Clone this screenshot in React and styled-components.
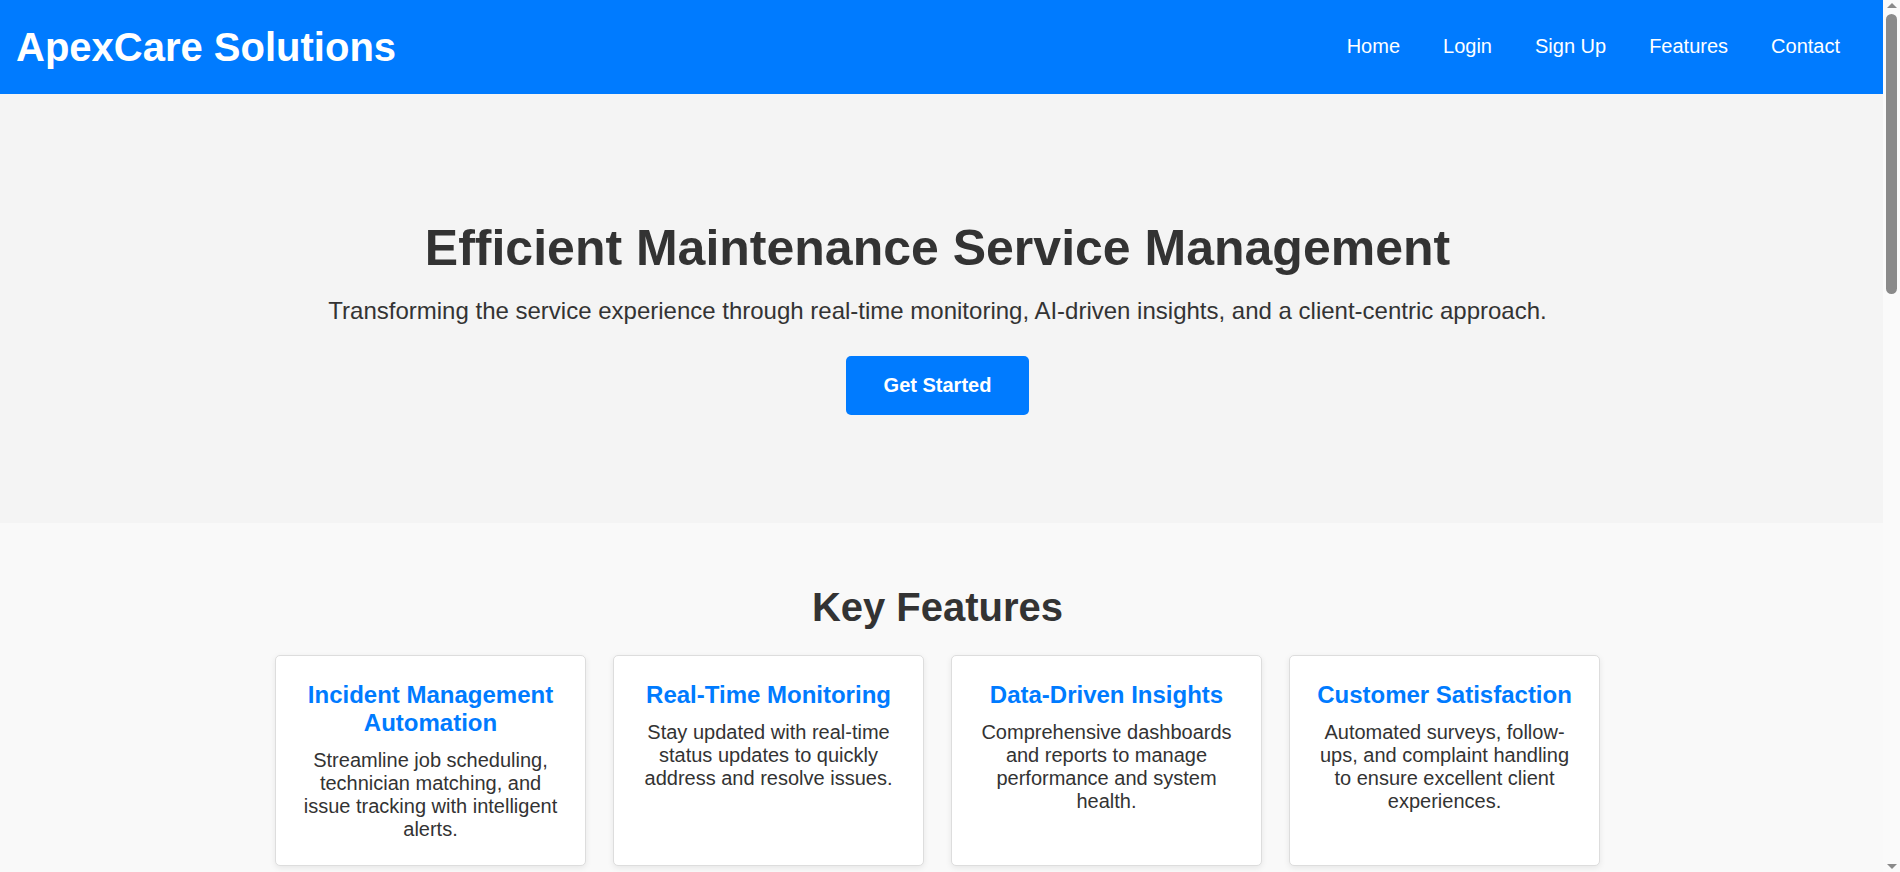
import React from 'react'
import styled, { createGlobalStyle } from 'styled-components'

const GlobalStyle = createGlobalStyle`
  html::-webkit-scrollbar { display: none; }
  html { scrollbar-width: none; }
  body {
    margin: 0;
    font-family: "Liberation Sans", Arial, Helvetica, sans-serif;
    color: #333;
    background: #f9f9f9;
  }
  * { box-sizing: border-box; }
`

const Page = styled.div`
  margin-right: 17px;
`

const ScrollTrack = styled.div`
  position: fixed;
  top: 0;
  right: 0;
  width: 17px;
  height: 100vh;
  display: flex;
  flex-direction: column;
  align-items: center;
  justify-content: space-between;
  padding: 3px 0;
  background: #fafafa;
`

const Arrow = styled.div`
  width: 0;
  height: 0;
  border-left: 5px solid transparent;
  border-right: 5px solid transparent;
  ${(p) => (p.$down ? 'border-top: 5px solid #8a8a8a;' : 'border-bottom: 5px solid #8a8a8a;')}
`

const Thumb = styled.div`
  position: absolute;
  top: 14px;
  left: 3px;
  width: 11px;
  height: 280px;
  border-radius: 6px;
  background: #8a8a8a;
`

const Header = styled.header`
  display: flex;
  justify-content: space-between;
  align-items: center;
  height: 94px;
  padding: 0 16px;
  background: #007bff;
  color: #fff;
`

const Logo = styled.h1`
  margin: 0;
  font-size: 40px;
  font-weight: 700;
`

const Nav = styled.nav`
  display: flex;
  gap: 43px;
  padding: 0 27px 2px 0;
`

const NavLink = styled.a`
  color: #fff;
  font-size: 20px;
  text-decoration: none;
`

const Hero = styled.section`
  display: flex;
  flex-direction: column;
  align-items: center;
  text-align: center;
  padding: 125px 24px 108px 16px;
  background: #f4f4f4;
`

const HeroTitle = styled.h2`
  margin: 0 0 20px;
  font-size: 50px;
  font-weight: 700;
`

const HeroText = styled.p`
  margin: 0 0 31px;
  font-size: 24px;
`

const Button = styled.a`
  display: inline-block;
  padding: 18px 38px;
  border: none;
  border-radius: 5px;
  background: #007bff;
  color: #fff;
  font-family: inherit;
  font-size: 20px;
  font-weight: 700;
  line-height: 23px;
  text-decoration: none;
  align-self: center;
`

const Section = styled.section`
  padding: ${(p) => p.$pad || '62px 24px 60px 16px'};
  background: ${(p) => p.$bg || '#f9f9f9'};
  text-align: center;
`

const SectionTitle = styled.h2`
  margin: 0 0 25px;
  font-size: 40px;
  font-weight: 700;
`

const CardGrid = styled.div`
  display: grid;
  grid-template-columns: repeat(${(p) => p.$cols || 4}, 311.5px);
  gap: 26.5px;
  justify-content: center;
`

const Card = styled.div`
  padding: 25px 24px 24px;
  background: #fff;
  border: 1px solid #ddd;
  border-radius: 5px;
  box-shadow: 0 2px 6px rgba(0, 0, 0, 0.08);
`

const CardTitle = styled.h3`
  margin: 0 0 12px;
  font-size: 24px;
  font-weight: 700;
  color: #007bff;
`

const CardText = styled.p`
  margin: 0;
  font-size: 20px;
`

const Form = styled.form`
  display: flex;
  flex-direction: column;
  gap: 16px;
  width: 600px;
  margin: 0 auto;
`

const Field = styled.input`
  padding: 14px;
  border: 1px solid #ccc;
  border-radius: 5px;
  font: inherit;
  font-size: 18px;
`

const Area = styled.textarea`
  height: 160px;
  padding: 14px;
  border: 1px solid #ccc;
  border-radius: 5px;
  font: inherit;
  font-size: 18px;
`

const Footer = styled.footer`
  padding: 30px 16px;
  background: #333;
  color: #fff;
  text-align: center;
  font-size: 16px;
`

const features = [
  {
    title: 'Incident Management Automation',
    text: 'Streamline job scheduling, technician matching, and issue tracking with intelligent alerts.',
  },
  {
    title: 'Real-Time Monitoring',
    text: 'Stay updated with real-time status updates to quickly address and resolve issues.',
  },
  {
    title: 'Data-Driven Insights',
    text: 'Comprehensive dashboards and reports to manage performance and system health.',
  },
  {
    title: 'Customer Satisfaction',
    text: 'Automated surveys, follow-ups, and complaint handling to ensure excellent client experiences.',
  },
]

const steps = [
  { title: 'Report an Issue', text: 'Clients log requests in seconds from any device.' },
  { title: 'Match a Technician', text: 'The right expert is assigned based on skills and location.' },
  { title: 'Resolve & Review', text: 'Track progress live and share feedback once the job is done.' },
]

const quotes = [
  { title: 'Facility Manager', text: '"Response times dropped by half after we switched to ApexCare."' },
  { title: 'Operations Lead', text: '"The dashboards give us a clear view of every open job."' },
  { title: 'Property Owner', text: '"Our tenants love the follow-ups and quick resolutions."' },
]

export default function App() {
  return (
    <>
      <GlobalStyle />
      <Page>
        <Header>
          <Logo>ApexCare Solutions</Logo>
          <Nav>
            <NavLink href="#">Home</NavLink>
            <NavLink href="#">Login</NavLink>
            <NavLink href="#">Sign Up</NavLink>
            <NavLink href="#">Features</NavLink>
            <NavLink href="#">Contact</NavLink>
          </Nav>
        </Header>

        <Hero>
          <HeroTitle>Efficient Maintenance Service Management</HeroTitle>
          <HeroText>
            Transforming the service experience through real-time monitoring, AI-driven insights, and a client-centric approach.
          </HeroText>
          <Button href="#">Get Started</Button>
        </Hero>

        <Section>
          <SectionTitle>Key Features</SectionTitle>
          <CardGrid>
            {features.map((f) => (
              <Card key={f.title}>
                <CardTitle>{f.title}</CardTitle>
                <CardText>{f.text}</CardText>
              </Card>
            ))}
          </CardGrid>
        </Section>

        <Section $bg="#f4f4f4" $pad="80px 24px 100px 16px">
          <SectionTitle>How It Works</SectionTitle>
          <CardGrid $cols={3}>
            {steps.map((s) => (
              <Card key={s.title}>
                <CardTitle>{s.title}</CardTitle>
                <CardText>{s.text}</CardText>
              </Card>
            ))}
          </CardGrid>
        </Section>

        <Section $pad="80px 24px 100px 16px">
          <SectionTitle>What Our Clients Say</SectionTitle>
          <CardGrid $cols={3}>
            {quotes.map((q) => (
              <Card key={q.title}>
                <CardTitle>{q.title}</CardTitle>
                <CardText>{q.text}</CardText>
              </Card>
            ))}
          </CardGrid>
        </Section>

        <Section $bg="#f4f4f4" $pad="80px 24px 120px 16px">
          <SectionTitle>Contact Us</SectionTitle>
          <Form onSubmit={(e) => e.preventDefault()}>
            <Field placeholder="Name" />
            <Field placeholder="Email" />
            <Area placeholder="Message" />
            <Button as="button" type="submit">Send Message</Button>
          </Form>
        </Section>

        <Footer>&copy; 2024 ApexCare Solutions. All rights reserved.</Footer>
      </Page>

      <ScrollTrack aria-hidden="true">
        <Arrow />
        <Thumb />
        <Arrow $down />
      </ScrollTrack>
    </>
  )
}
